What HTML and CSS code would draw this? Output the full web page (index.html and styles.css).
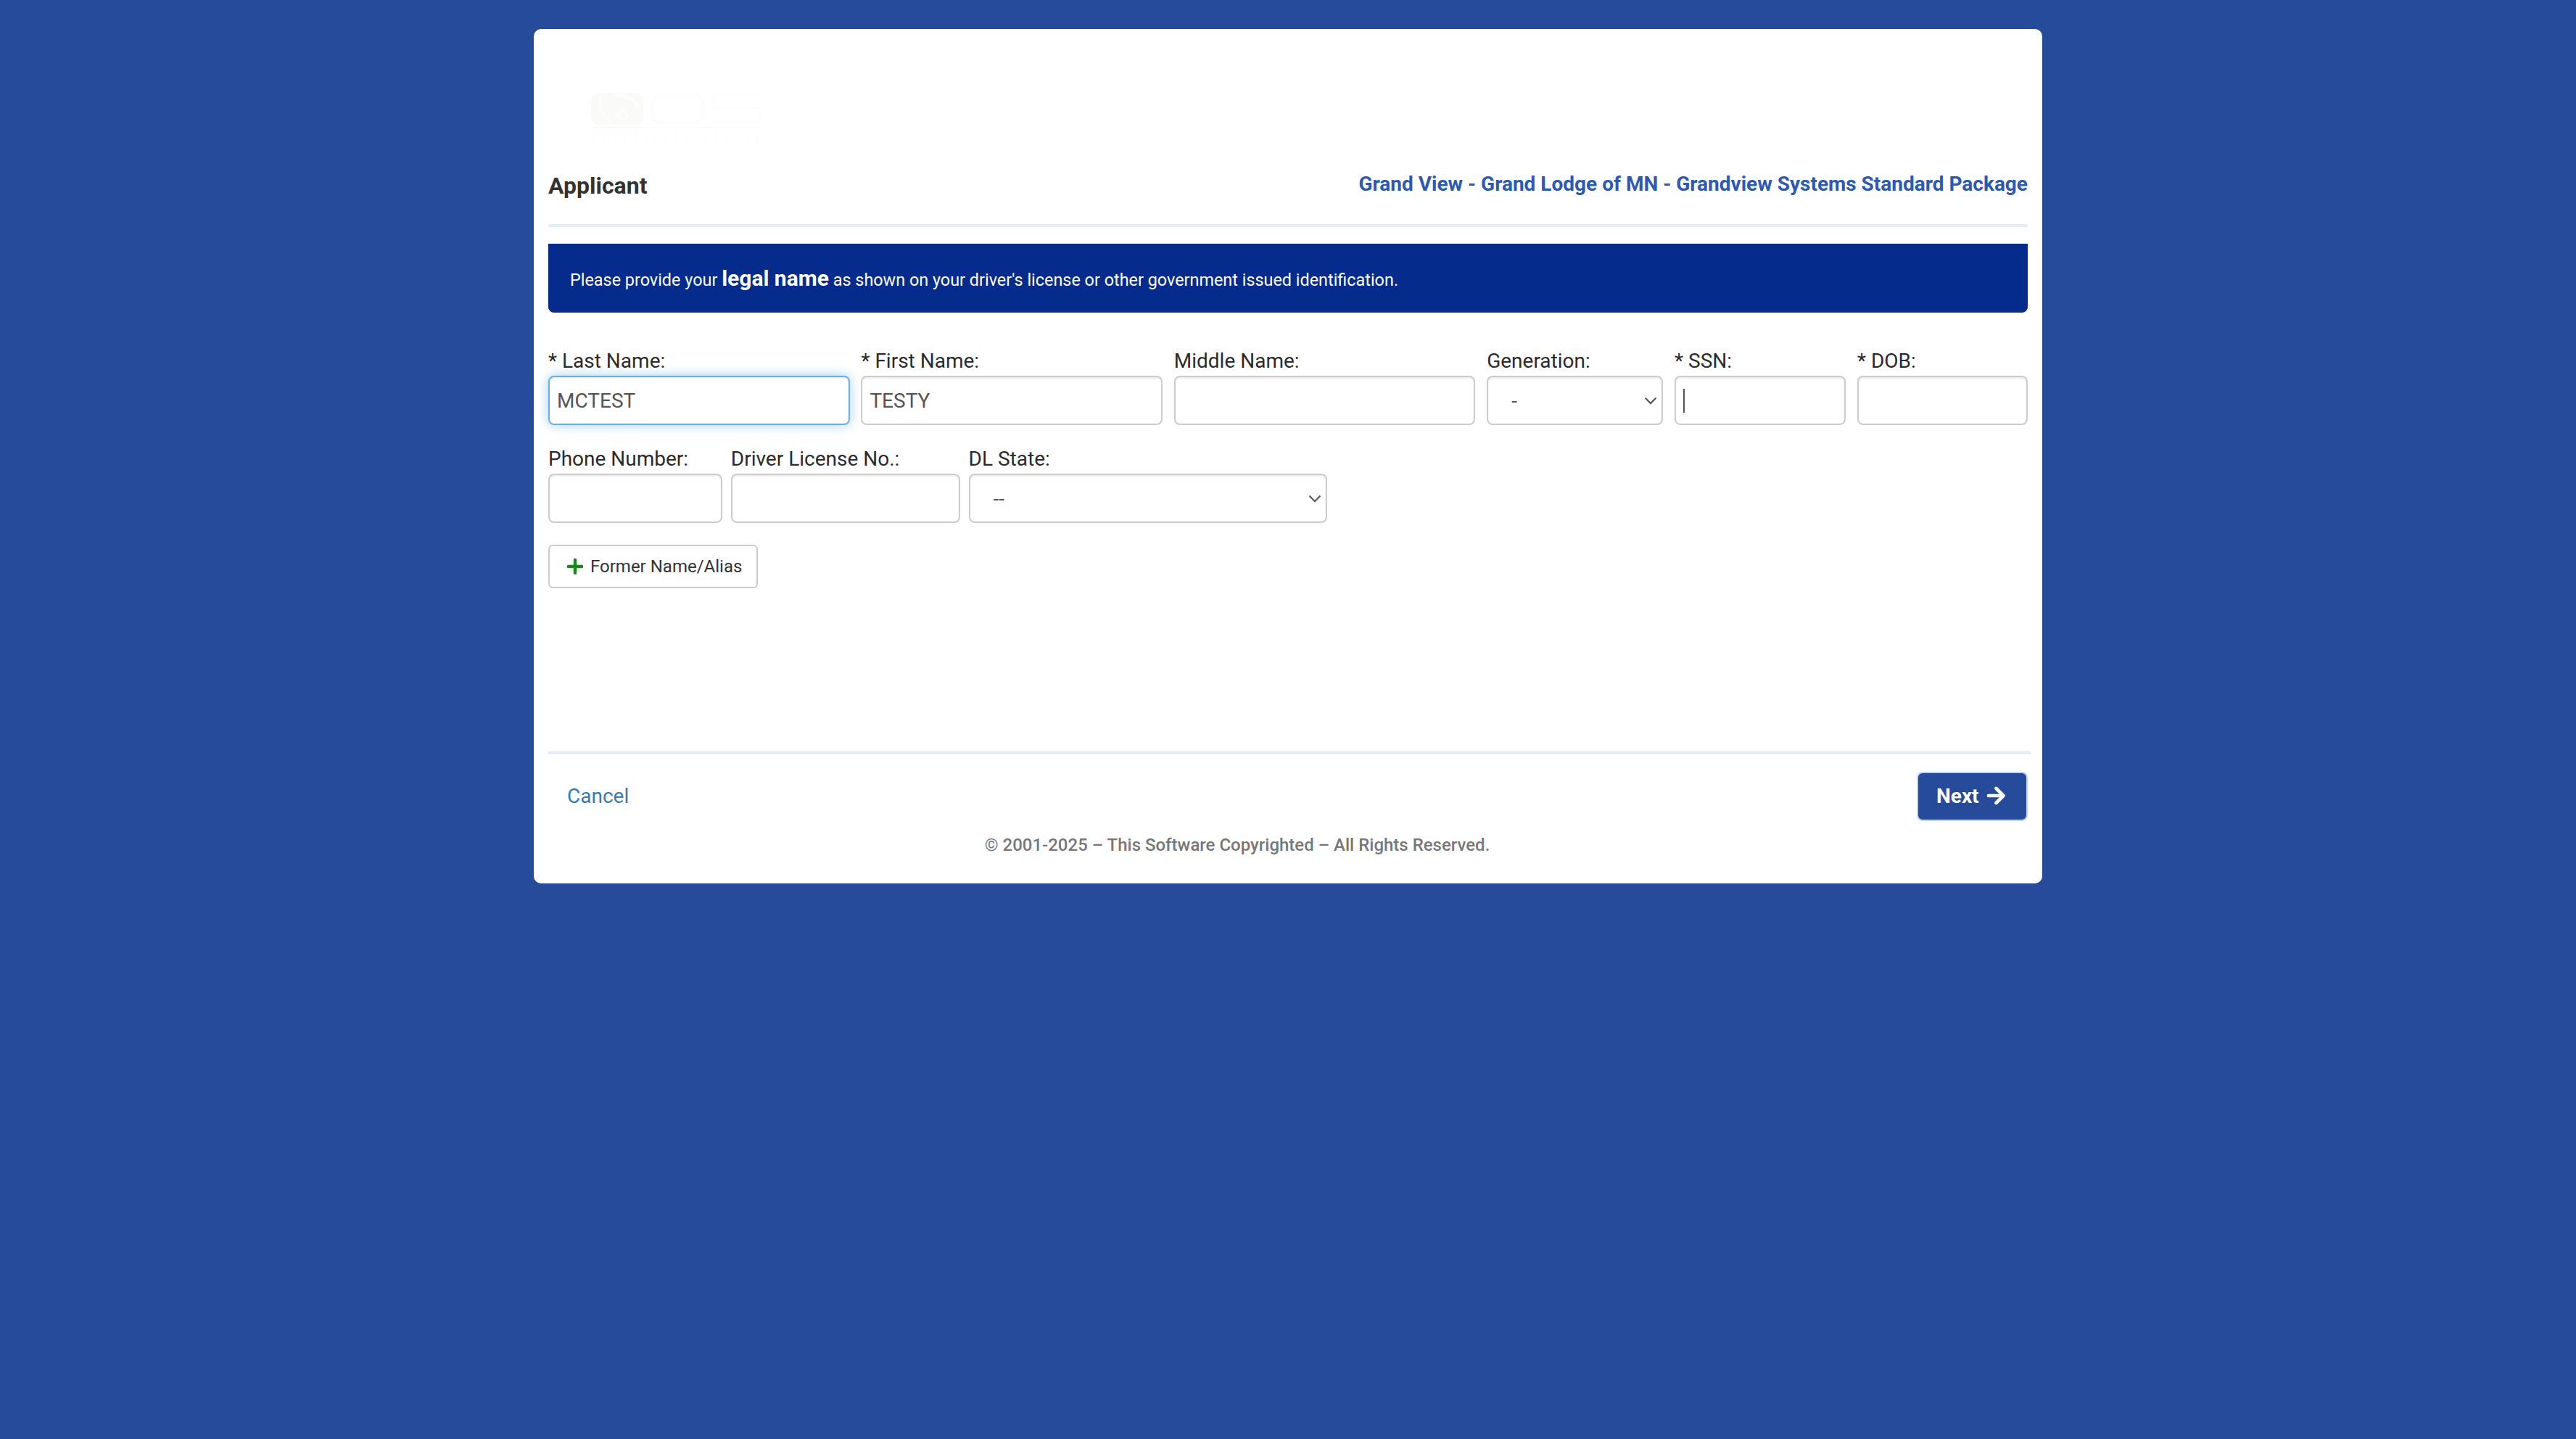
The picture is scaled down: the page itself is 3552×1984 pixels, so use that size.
FILE: index.html
```html
<!DOCTYPE html>
<html lang="en">
<head>
    <meta charset="UTF-8">
    <meta name="viewport" content="width=device-width, initial-scale=1.0">
    <title>Applicant</title>
    <link rel="stylesheet" href="styles.css">
</head>
<body>
    <main class="card">
        <header class="card-header">
            <svg class="logo" viewBox="0 0 236 72" aria-hidden="true">
                <rect x="0" y="1" width="72" height="44" rx="10" fill="#fafaf9"/>
                <path d="M14 6c-6 12 2 26 14 36M30 5c20-2 34 6 34 18M36 32l8-7 7 7-7 7z" fill="none" stroke="#fdfdfd" stroke-width="4"/>
                <rect x="84" y="4" width="70" height="38" rx="12" fill="none" stroke="#fdfdfd" stroke-width="5"/>
                <path d="M234 4h-58q-8 0-8 9t8 9h50q8 0 8 9t-8 10h-58" fill="none" stroke="#fdfdfd" stroke-width="4"/>
                <path d="M2 49h66" stroke="#f8f8f8" stroke-width="2"/>
                <path d="M68 49h166" stroke="#fcfcfc" stroke-width="2"/>
                <path d="M4 64h230" stroke="#fdfdfd" stroke-width="12" stroke-dasharray="2 12"/>
            </svg>
            <div class="heading">
                <h2>Applicant</h2>
                <div class="package">Grand View - Grand Lodge of MN - Grandview Systems Standard Package</div>
            </div>
        </header>

        <div class="notice">Please provide your <strong>legal name</strong> as shown on your driver's license or other government issued identification.</div>

        <form id="applicantForm">
            <div class="row row-name">
                <div class="field">
                    <label for="lastName">* Last Name:</label>
                    <input type="text" id="lastName" class="active" value="MCTEST">
                </div>
                <div class="field">
                    <label for="firstName">* First Name:</label>
                    <input type="text" id="firstName" value="TESTY">
                </div>
                <div class="field">
                    <label for="middleName">Middle Name:</label>
                    <input type="text" id="middleName">
                </div>
                <div class="field">
                    <label for="generation">Generation:</label>
                    <div class="select">
                        <select id="generation"><option>-</option></select>
                        <svg class="chevron" viewBox="0 0 18 11"><path d="M1.5 1.5L9 9.2l7.500-7.700"/></svg>
                    </div>
                </div>
                <div class="field">
                    <label for="ssn">* SSN:</label>
                    <div class="ssn">
                        <input type="text" id="ssn">
                        <span class="caret"></span>
                    </div>
                </div>
                <div class="field">
                    <label for="dob">* DOB:</label>
                    <input type="text" id="dob">
                </div>
            </div>

            <div class="row row-license">
                <div class="field">
                    <label for="phone">Phone Number:</label>
                    <input type="text" id="phone">
                </div>
                <div class="field">
                    <label for="license">Driver License No.:</label>
                    <input type="text" id="license">
                </div>
                <div class="field">
                    <label for="dlState">DL State:</label>
                    <div class="select">
                        <select id="dlState"><option>--</option></select>
                        <svg class="chevron" viewBox="0 0 18 11"><path d="M1.5 1.5L9 9.2l7.500-7.700"/></svg>
                    </div>
                </div>
            </div>

            <button type="button" class="alias">
                <svg viewBox="0 0 22 22"><path d="M11 2v18M2 11h18"/></svg>
                Former Name/Alias
            </button>
        </form>

        <div class="actions">
            <a href="#" class="cancel">Cancel</a>
            <button type="submit" form="applicantForm" class="next">
                Next
                <svg viewBox="0 0 26 26"><path d="M3 13h20M13.500 3L23.500 13 13.500 23"/></svg>
            </button>
        </div>

        <footer>© 2001-2025 – This Software Copyrighted – All Rights Reserved.</footer>
    </main>
</body>
</html>
```
FILE: styles.css
```css
* {
    box-sizing: border-box;
}

body {
    margin: 0;
    padding: 40px 0;
    background-color: #264b9a;
    font-family: Roboto, "Liberation Sans", sans-serif;
    font-size: 28px;
    line-height: 40px;
    color: #333;
}

.card {
    width: 2080px;
    height: 1178px;
    margin: 0 auto;
    padding: 0 20px;
    background-color: #fff;
    border-radius: 10px;
}

.card-header {
    height: 273px;
    padding-top: 87px;
    border-bottom: 4px solid #e3eef9;
}

.logo {
    display: block;
    width: 236px;
    height: 72px;
    margin-left: 59px;
}

.heading {
    display: flex;
    justify-content: space-between;
    margin-top: 33px;
}

h2 {
    margin: 4px 0 0;
    font-size: 32px;
    font-weight: bold;
    line-height: 40px;
}

.package {
    margin-top: 2px;
    font-weight: bold;
    color: #2b59b5;
}

.notice {
    height: 95px;
    margin-top: 23px;
    padding: 28px 30px;
    background-color: #052b8d;
    border-bottom: 2px solid #122d70;
    border-radius: 0 0 8px 8px;
    color: #fff;
    font-size: 23.4px;
}

.notice strong {
    font-size: 30px;
}

.row {
    display: grid;
}

.row-name {
    grid-template-columns: 415.5px 415.5px 415.5px 243px 236px 235px;
    justify-content: space-between;
    margin-top: 47px;
}

.row-license {
    grid-template-columns: 240px 316px 494px;
    column-gap: 11.8px;
    margin-top: 27px;
}

label {
    display: block;
    color: #2b2b2b;
}

input,
select {
    display: block;
    width: 100%;
    height: 68px;
    padding: 0 10px;
    border: 2px solid #ccc;
    border-radius: 8px;
    background-color: #fff;
    box-shadow: inset 0 2px 2px rgba(0, 0, 0, 0.075);
    color: #555;
    font-family: inherit;
    font-size: 28px;
}

input.active {
    border-color: #66afe9;
    box-shadow: inset 0 2px 2px rgba(0, 0, 0, 0.075), 0 0 16px rgba(102, 175, 233, 0.6);
}

.select,
.ssn {
    position: relative;
}

select {
    appearance: none;
    padding-left: 32px;
}

.chevron {
    position: absolute;
    right: 8px;
    top: 29px;
    width: 18px;
    height: 11px;
    fill: none;
    stroke: #555;
    stroke-width: 2.2;
}

.caret {
    position: absolute;
    left: 12px;
    top: 18px;
    width: 2px;
    height: 33px;
    background-color: #555;
}

button {
    display: flex;
    align-items: center;
    font-family: inherit;
    cursor: pointer;
}

button svg {
    fill: none;
    stroke-linecap: round;
    stroke-linejoin: round;
}

.alias {
    width: 289px;
    height: 60px;
    margin-top: 30px;
    padding: 0 0 0 24px;
    gap: 10px;
    border: 2px solid #ccc;
    border-radius: 6px;
    background-color: #fff;
    color: #333;
    font-size: 24px;
}

.alias svg {
    width: 22px;
    height: 22px;
    stroke: #178a17;
    stroke-width: 4.4;
}

.actions {
    display: flex;
    justify-content: space-between;
    width: 2044px;
    margin-top: 225px;
    padding: 24px 4px 0 26px;
    border-top: 4px solid #e1eefa;
}

.cancel {
    margin-top: 14px;
    color: #337ab7;
    text-decoration: none;
}

.next {
    width: 153px;
    height: 68px;
    padding: 0 0 2px 25px;
    gap: 10px;
    border: 2px solid #bfd3f6;
    border-radius: 8px;
    background-color: #264b9a;
    color: #fff;
    font-size: 28px;
    font-weight: bold;
}

.next svg {
    width: 26px;
    height: 26px;
    stroke: #fff;
    stroke-width: 4.6;
}

footer {
    margin: 13px 140px 0 0;
    text-align: center;
    color: #777;
    font-size: 24px;
    font-weight: 500;
}
```
